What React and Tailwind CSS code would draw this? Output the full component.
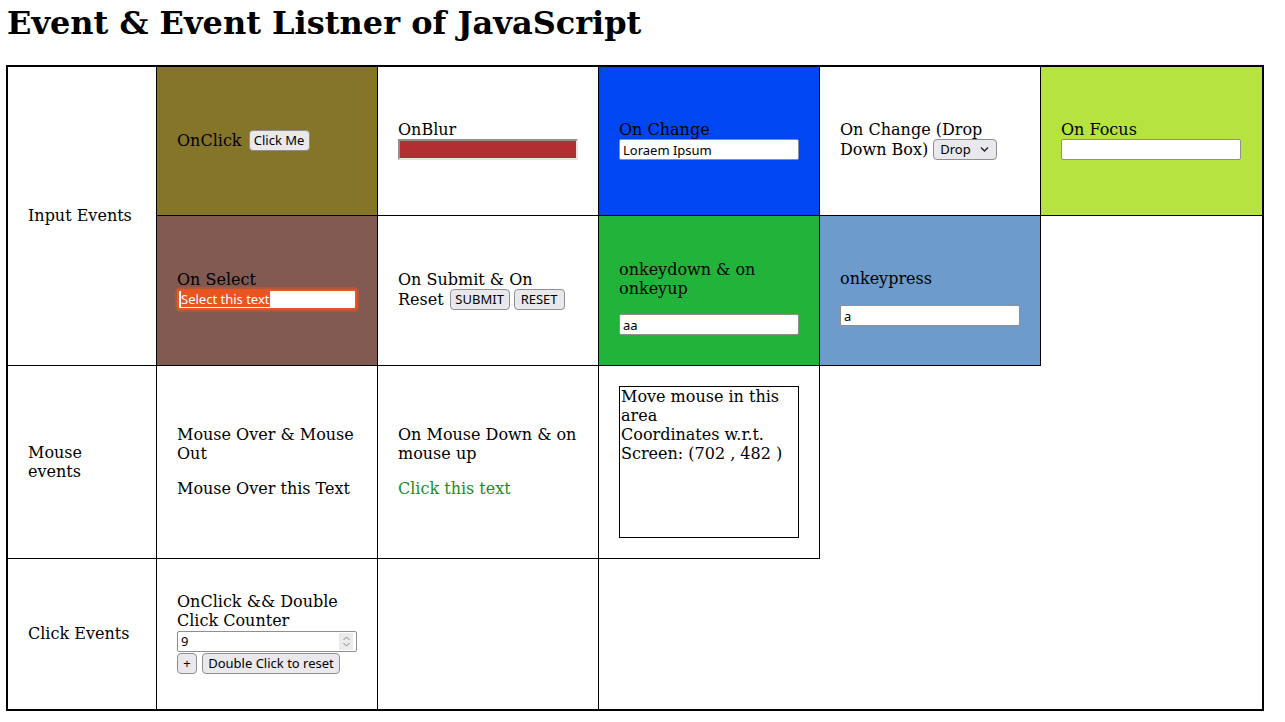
import React from 'react';

function TextBox({ value = '', className = '' }) {
  return (
    <input
      readOnly
      value={value}
      className={`h-[21px] w-[180px] rounded-[2px] border border-[#8f8f8f] bg-white px-[3px] font-['Noto_Sans',sans-serif] text-[13px] text-black outline-none ${className}`}
    />
  );
}

function Btn({ children, className = '' }) {
  return (
    <button
      type="button"
      className={`flex h-[21px] shrink-0 items-center justify-center rounded-[4px] border border-[#8f8f8f] bg-[#e9e9ed] font-['Noto_Sans',sans-serif] text-[13px] leading-none text-black ${className}`}
    >
      {children}
    </button>
  );
}

export default function App() {
  return (
    <div className="min-h-screen bg-white px-[6px] pt-[5px] font-['DejaVu_Serif',serif] text-[16px] leading-[19px] text-black">
      <h1 className="ml-[1px] text-[32px] font-bold leading-[37px]">Event &amp; Event Listner of JavaScript</h1>

      <div className="mt-[23px] grid w-[1258px] grid-cols-[149px_221px_221px_221px_221px_221px] grid-rows-[149px_150px_193px_150px] border-2 border-black">
        {/* Input events */}
        <div className="col-start-1 row-span-2 row-start-1 flex items-center border-b border-r border-black px-5 pb-[2px]">
          Input Events
        </div>

        <div className="col-start-2 row-start-1 flex items-center border-b border-r border-black bg-[#857529] px-5 pb-[2px]">
          <span>OnClick</span>
          <Btn className="ml-[7px] w-[61px]">Click Me</Btn>
        </div>

        <div className="col-start-3 row-start-1 flex items-center border-b border-r border-black px-5 pb-[2px]">
          <div className="flex flex-col">
            <div className="h-[19px]">OnBlur</div>
            <input
              readOnly
              className="h-[21px] w-[180px] border-2 border-b-[#e3e3e3] border-l-[#8f8f8f] border-r-[#e3e3e3] border-t-[#8f8f8f] bg-[#b32e30] outline-none"
            />
          </div>
        </div>

        <div className="col-start-4 row-start-1 flex items-center border-b border-r border-black bg-[#0047f3] px-5 pb-[2px]">
          <div className="flex flex-col">
            <div className="h-[19px]">On Change</div>
            <TextBox value="Loraem Ipsum" />
          </div>
        </div>

        <div className="col-start-5 row-start-1 flex items-center border-b border-r border-black px-5 pb-[2px]">
          <div className="flex flex-col">
            <div className="h-[19px]">On Change (Drop</div>
            <div className="flex h-[21px] items-center">
              <span>Down Box)</span>
              <div className="relative ml-[5px] flex h-[21px] w-[64px] items-center rounded-[4px] border border-[#8f8f8f] bg-[#e9e9ed] pl-[6px] font-['Noto_Sans',sans-serif] text-[13px] leading-none">
                Drop
                <svg className="absolute right-[7px] top-[6px]" width="9" height="7" viewBox="0 0 9 7">
                  <polyline points="1,1.5 4.5,5 8,1.5" fill="none" stroke="#222" strokeWidth="1.4" />
                </svg>
              </div>
            </div>
          </div>
        </div>

        <div className="col-start-6 row-start-1 flex items-center border-b border-black bg-[#b6e33f] px-5 pb-[2px]">
          <div className="flex flex-col">
            <div className="h-[19px]">On Focus</div>
            <TextBox />
          </div>
        </div>

        <div className="col-start-2 row-start-2 flex items-center border-b border-r border-black bg-[#825a51] px-5 pb-[2px]">
          <div className="flex flex-col">
            <div className="h-[19px]">On Select</div>
            <div className="flex h-[21px] w-[180px] items-center rounded-[3px] border-2 border-[#e95420] bg-white pl-[2px] font-['Noto_Sans',sans-serif] text-[13px] shadow-[0_0_0_2px_rgba(233,84,32,0.45)]">
              <span className="bg-[#e95420] leading-[16px] text-white">Select this text</span>
            </div>
          </div>
        </div>

        <div className="col-start-3 row-start-2 flex items-center border-b border-r border-black px-5 pb-[2px]">
          <div className="flex flex-col">
            <div className="h-[19px]">On Submit &amp; On</div>
            <div className="flex h-[21px] items-center">
              <span>Reset</span>
              <Btn className="ml-[6px] w-[60px]">SUBMIT</Btn>
              <Btn className="ml-[4px] w-[51px]">RESET</Btn>
            </div>
          </div>
        </div>

        <div className="col-start-4 row-start-2 flex items-center border-b border-r border-black bg-[#22b43a] px-5 pb-[2px]">
          <div className="flex flex-col pt-4">
            <div>
              onkeydown &amp; on
              <br />
              onkeyup
            </div>
            <TextBox value="aa" className="mt-[16px]" />
          </div>
        </div>

        <div className="col-start-5 row-start-2 flex items-center border-b border-r border-black bg-[#6c9bcc] px-5 pb-[2px]">
          <div className="flex flex-col pt-4">
            <div>onkeypress</div>
            <TextBox value="a" className="mt-[17px]" />
          </div>
        </div>

        {/* Mouse events */}
        <div className="col-start-1 row-start-3 flex items-center border-b border-r border-black px-5">
          <div>
            Mouse
            <br />
            events
          </div>
        </div>

        <div className="col-start-2 row-start-3 flex items-center border-b border-r border-black px-5 pb-[2px]">
          <div className="flex flex-col gap-4">
            <div>
              Mouse Over &amp; Mouse
              <br />
              Out
            </div>
            <div>Mouse Over this Text</div>
          </div>
        </div>

        <div className="col-start-3 row-start-3 flex items-center border-b border-r border-black px-5 pb-[2px]">
          <div className="flex flex-col gap-4">
            <div>
              On Mouse Down &amp; on
              <br />
              mouse up
            </div>
            <div className="text-[#228b22]">Click this text</div>
          </div>
        </div>

        <div className="col-start-4 row-start-3 flex items-center border-b border-r border-black px-5">
          <div className="h-[152px] w-[181px] border border-black pl-[1px]">
            Move mouse in this
            <br />
            area
            <br />
            Coordinates w.r.t.
            <br />
            Screen: (702 , 482 )
          </div>
        </div>

        {/* Click events */}
        <div className="col-start-1 row-start-4 flex items-center border-r border-black px-5 pb-[2px]">
          Click Events
        </div>

        <div className="col-start-2 row-start-4 flex items-center border-r border-black px-5 pb-[3px]">
          <div className="flex flex-col">
            <div>
              OnClick &amp;&amp; Double
              <br />
              Click Counter
            </div>
            <div className="mt-[1px] flex h-[21px] w-[180px] items-center justify-between rounded-[2px] border border-[#8f8f8f] bg-white pl-[3px] pr-[3px] font-['Noto_Sans',sans-serif] text-[13px]">
              <span>9</span>
              <div className="flex h-[17px] w-[14px] items-center justify-center bg-[#ebebeb]">
                <svg width="9" height="13" viewBox="0 0 9 13">
                  <polyline points="1.5,5 4.5,2 7.5,5" fill="none" stroke="#888" strokeWidth="1" />
                  <polyline points="1.5,8 4.5,11 7.5,8" fill="none" stroke="#888" strokeWidth="1" />
                </svg>
              </div>
            </div>
            <div className="mt-[1px] flex items-center gap-[5px]">
              <Btn className="w-[20px]">+</Btn>
              <Btn className="w-[138px]">Double Click to reset</Btn>
            </div>
          </div>
        </div>

        <div className="col-start-3 row-start-4 border-r border-black"></div>
      </div>
    </div>
  );
}
